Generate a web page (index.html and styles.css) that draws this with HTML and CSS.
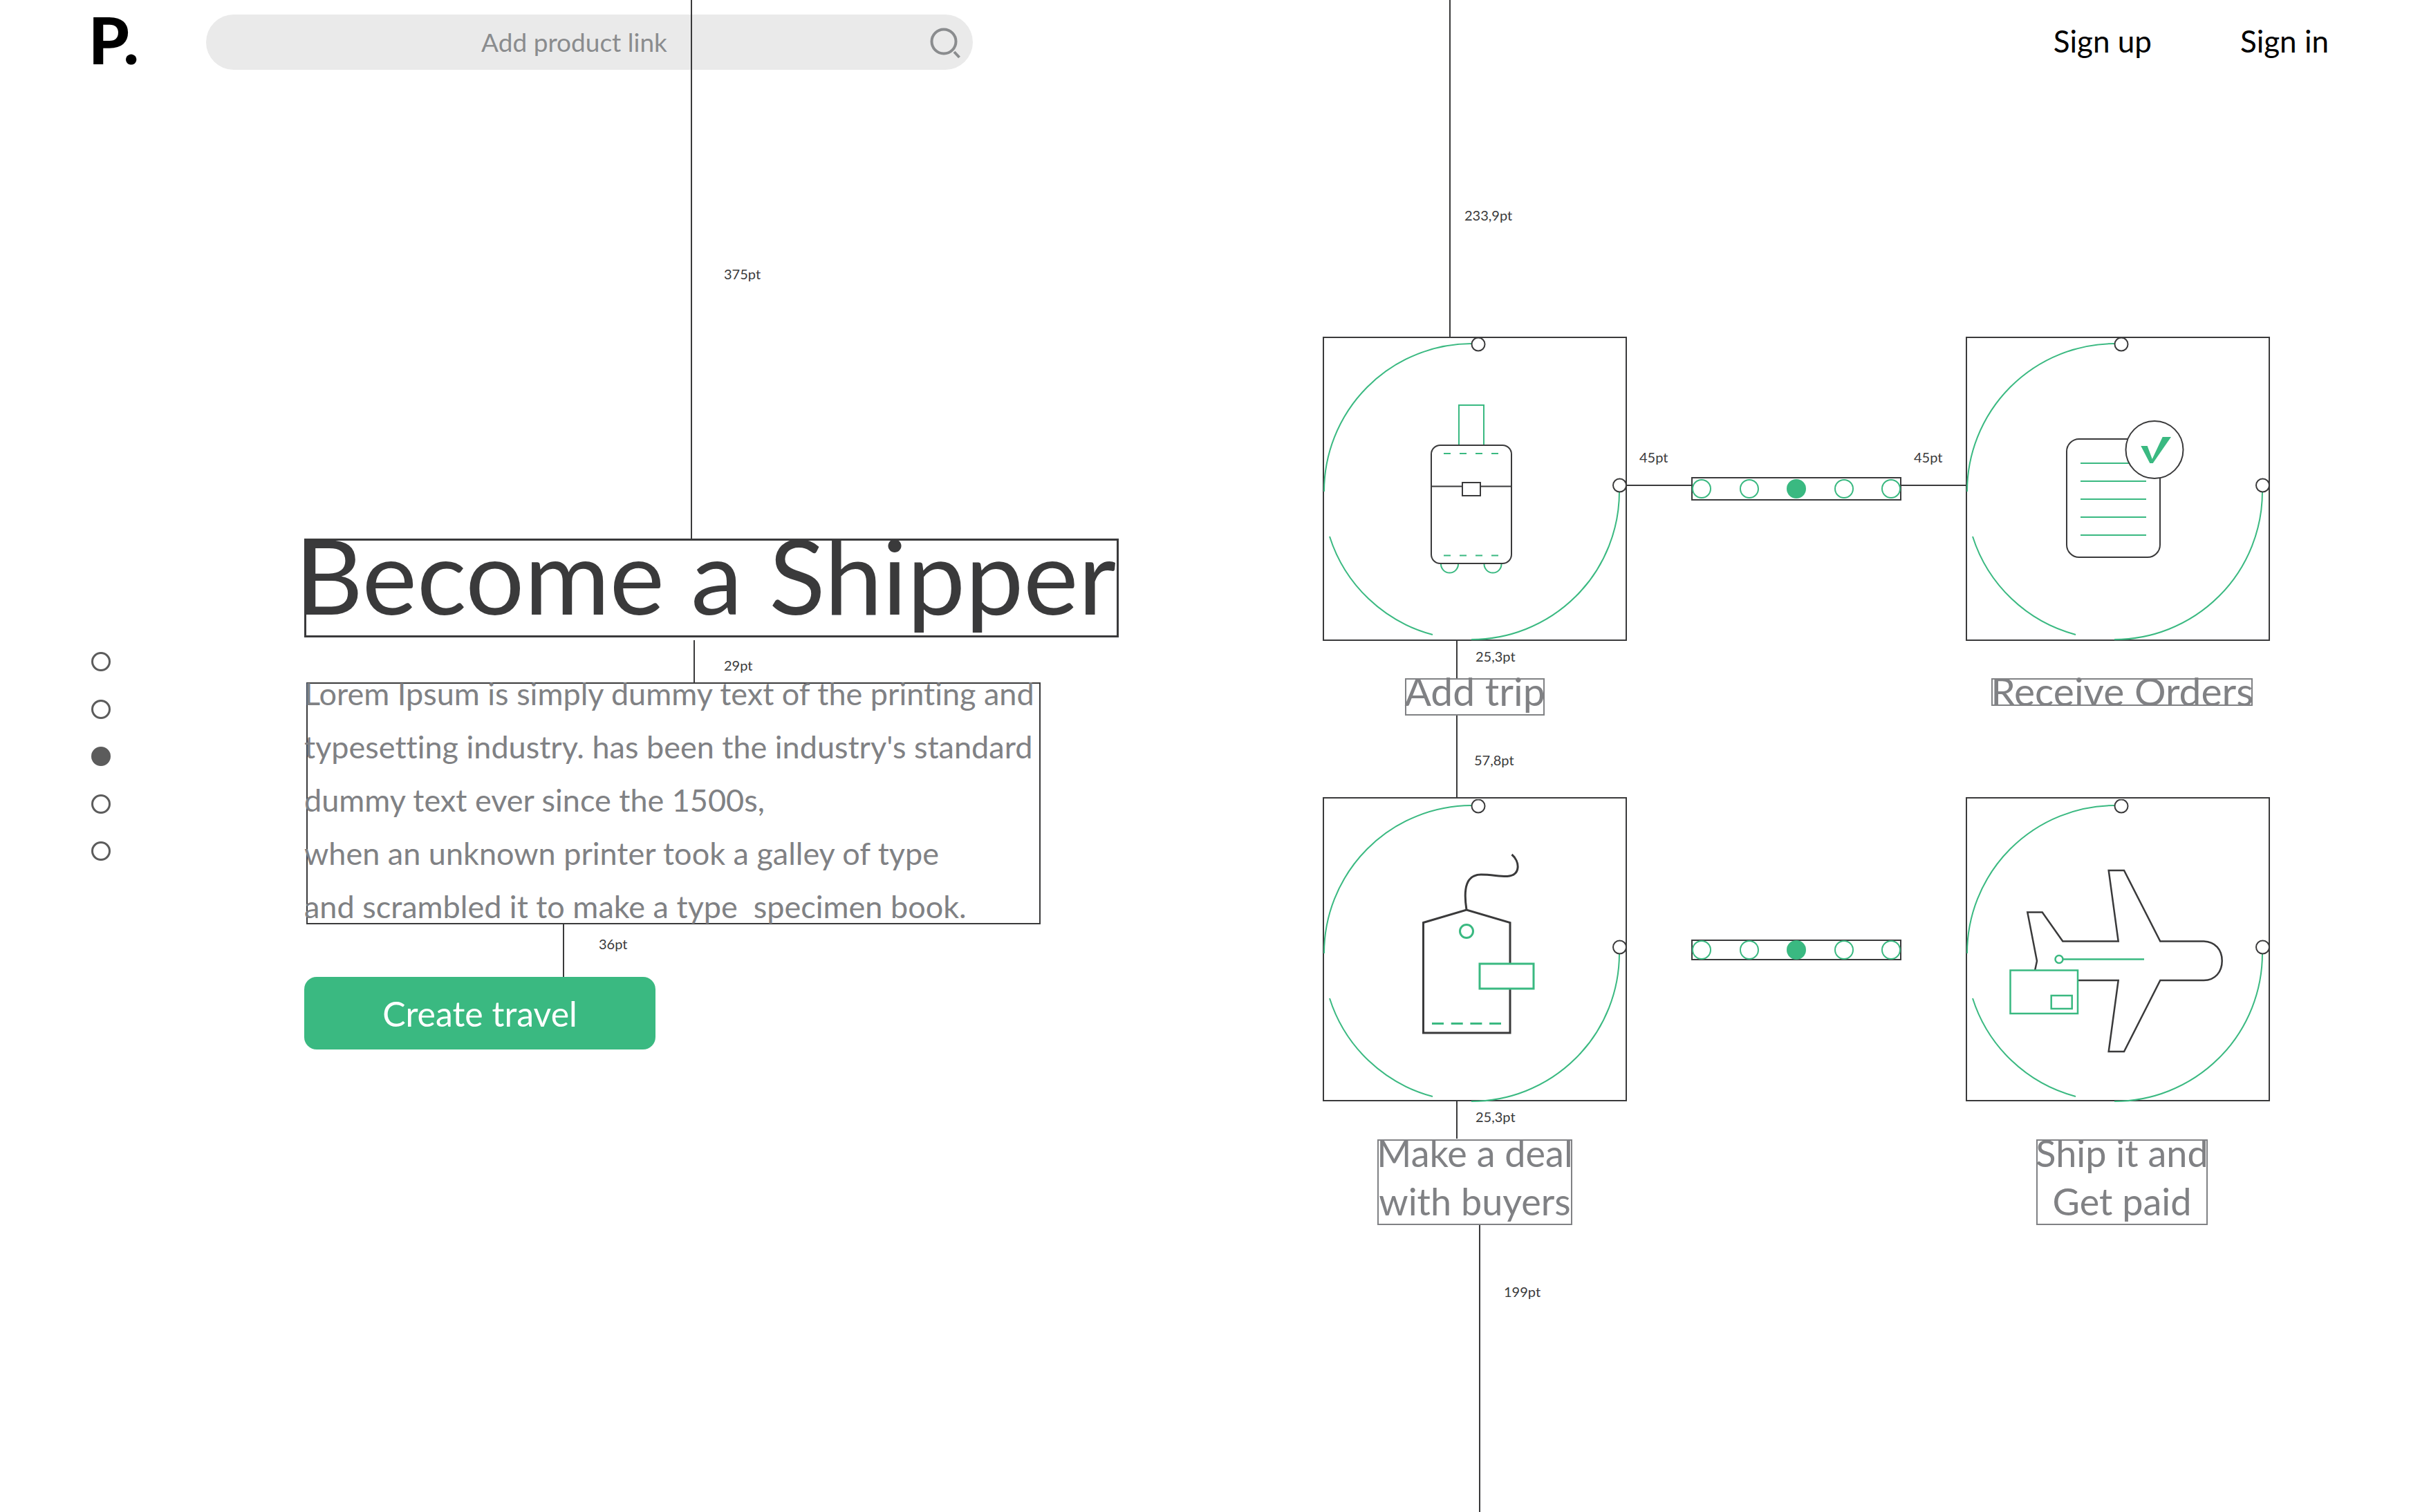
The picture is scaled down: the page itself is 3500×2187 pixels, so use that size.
FILE: index.html
```html
<!DOCTYPE html>
<html lang="en">
<head>
<meta charset="utf-8">
<title>Become a Shipper</title>
<meta name="viewport" content="width=device-width, initial-scale=1">
<link rel="stylesheet" href="styles.css">
</head>
<body>
<svg class="sprite" aria-hidden="true">
  <symbol id="orbit" viewBox="0 0 438 440">
    <g fill="none" stroke="#3ab981" stroke-width="2">
      <path d="M1 223A214 214 0 0 1 214 9"/>
      <path d="M428 223A214 214 0 0 1 214 437"/>
      <path d="M9 288A214 214 0 0 0 158 430"/>
    </g>
    <g fill="#fff" stroke="#3a3a3b" stroke-width="2">
      <circle cx="224" cy="10" r="9.500"/>
      <circle cx="428.500" cy="214" r="9.500"/>
    </g>
  </symbol>
</svg>
<div class="page">
  <header class="header">
    <a class="logo" href="#">P.</a>
    <form class="search">
      <input class="search-input" type="text" placeholder="Add product link" aria-label="Add product link">
      <button class="search-button" type="button" aria-label="Search">
        <svg width="46" height="48" viewBox="0 0 46 48" fill="none" stroke="#8a8c8e" stroke-width="4"><circle cx="21" cy="21" r="17.500"/><path d="M36 36l7.500 8"/></svg>
      </button>
    </form>
    <nav class="account">
      <a href="#">Sign up</a>
      <a href="#">Sign in</a>
    </nav>
  </header>

  <main class="main">
    <nav class="pager" aria-label="Sections">
      <a class="dot" href="#" aria-label="Section 1"></a>
      <a class="dot" href="#" aria-label="Section 2"></a>
      <a class="dot dot-current" href="#" aria-label="Section 3"></a>
      <a class="dot" href="#" aria-label="Section 4"></a>
      <a class="dot" href="#" aria-label="Section 5"></a>
    </nav>

    <section class="intro">
      <div class="title-box">
        <div class="ruler ruler-top ruler-title"><span>375pt</span></div>
        <h1 class="title">Become a Shipper</h1>
      </div>
      <div class="ruler ruler-text"><span>29pt</span></div>
      <div class="text-box">
        <p class="text">Lorem Ipsum is simply dummy text of the printing and<br>typesetting industry. has been the industry's standard<br>dummy text ever since the 1500s,<br>when an unknown printer took a galley of type<br>and scrambled it to make a type&nbsp; specimen book.</p>
      </div>
      <div class="ruler ruler-button"><span>36pt</span></div>
      <button class="create" type="button">Create travel</button>
    </section>

    <section class="steps">
      <article class="step">
        <div class="frame">
          <div class="ruler ruler-top ruler-frame"><span>233,9pt</span></div>
          <svg class="art" viewBox="0 0 438 440" fill="none" stroke="#3a3a3b" stroke-width="2">
            <use href="#orbit" width="438" height="440"/>
            <path stroke="#3ab981" d="M196 156V98h36v58"/>
            <rect x="156" y="156" width="116" height="171" rx="13"/>
            <path d="M156 215.500h116"/>
            <rect x="201" y="210" width="26" height="19" fill="#fff"/>
            <path stroke="#3ab981" stroke-dasharray="10 13" d="M174 168h82M174 315.500h82"/>
            <path stroke="#3ab981" d="M170 328a12.500 12.500 0 0 0 25 0M232.500 328a12.500 12.500 0 0 0 25 0"/>
          </svg>
        </div>
        <div class="ruler ruler-label"><span>25,3pt</span></div>
        <h2 class="label label-descender"><span>Add trip</span></h2>
        <div class="ruler ruler-next"><span>57,8pt</span></div>
      </article>

      <div class="connector">
        <div class="leg"><span>45pt</span></div>
        <div class="beads"><i></i><i></i><i class="bead-current"></i><i></i><i></i></div>
        <div class="leg"><span>45pt</span></div>
      </div>

      <article class="step step-right">
        <div class="frame">
          <svg class="art" viewBox="0 0 438 440" fill="none" stroke="#3a3a3b" stroke-width="2">
            <use href="#orbit" width="438" height="440"/>
            <rect x="145" y="147" width="135" height="171" rx="18"/>
            <path stroke="#3ab981" d="M165 182h70M165 208h95M165 234h95M165 260h95M165 286h95"/>
            <circle cx="272" cy="162.500" r="41.500" fill="#fff"/>
            <path fill="#3ab981" stroke="none" d="M252.300 157h9.400l7 18.900L283.700 144H296l-26.300 38h-4.400z"/>
          </svg>
        </div>
        <h2 class="label"><span>Receive Orders</span></h2>
      </article>

      <article class="step">
        <div class="frame">
          <svg class="art" viewBox="0 0 438 440" fill="none" stroke="#3a3a3b" stroke-width="3">
            <use href="#orbit" y="2" width="438" height="440"/>
            <path d="M144.500 180.500L207 162l63 18.500V340H144.500z"/>
            <path d="M207 162C202 130 207 111 228 111C243 111 256 114 266 113.500C286 112 284 92 272.500 82"/>
            <g stroke="#3ab981">
              <circle cx="207" cy="193" r="9.500"/>
              <rect x="226" y="240" width="78" height="36" fill="#fff"/>
              <path stroke-dasharray="17 10.700" d="M157 326.500h100"/>
            </g>
          </svg>
        </div>
        <div class="ruler ruler-label"><span>25,3pt</span></div>
        <h2 class="label label-descender label-double"><span>Make a deal<br>with buyers</span></h2>
        <div class="ruler ruler-bottom"><span>199pt</span></div>
      </article>

      <div class="connector connector-plain">
        <div class="beads beads-tight"><i></i><i></i><i class="bead-current"></i><i></i><i></i></div>
      </div>

      <article class="step step-right">
        <div class="frame">
          <svg class="art" viewBox="0 0 438 440" fill="none" stroke="#3a3a3b" stroke-width="2.500">
            <use href="#orbit" y="2" width="438" height="440"/>
            <path d="M99 250L102 236L88.300 165.500H109.700L139.300 207.500H219.700L205.700 105H228L280.300 207.500H343.300C360 208 369.700 220 369.700 235.700S360 264 343.300 264H280.300L228 367H205.700L219.700 264H161"/>
            <g stroke="#3ab981">
              <circle cx="134" cy="233.600" r="5.500"/>
              <path d="M140 233.600h117"/>
              <rect x="63.500" y="249.500" width="97.500" height="62.500" fill="#fff"/>
              <rect x="122.700" y="286" width="30" height="19"/>
            </g>
          </svg>
        </div>
        <h2 class="label label-descender label-double"><span>Ship it and<br>Get paid</span></h2>
      </article>
    </section>
  </main>
</div>
</body>
</html>
```
FILE: styles.css
```css
:root {
  --ink: #3a3a3b;
  --grey: #808184;
  --green: #3ab981;
}

* {
  box-sizing: border-box;
}

body {
  margin: 0;
  background: #fff;
  color: var(--ink);
  font-family: Lato, "Open Sans", sans-serif;
  font-variant-ligatures: none;
}

.sprite {
  position: absolute;
  width: 0;
  height: 0;
}

.page {
  display: flex;
  flex-direction: column;
  min-height: 100vh;
  overflow: hidden;
}

/* Header */
.header {
  display: flex;
  align-items: center;
  height: 122px;
  padding: 0 132px 0 128px;
}

.logo {
  width: 170px;
  padding-bottom: 8px;
  color: #000;
  font-family: "Lato Black", Lato, sans-serif;
  font-size: 94px;
  font-weight: 900;
  line-height: 114px;
  text-decoration: none;
}

.search {
  position: relative;
  width: 1109px;
}

.search-input {
  display: block;
  width: 100%;
  height: 80px;
  padding: 0 84px 2px 40px;
  border: 0;
  border-radius: 40px;
  background: #eaeaea;
  font: 37px Lato, sans-serif;
  text-align: center;
}

.search-input::placeholder {
  color: #8a8c8e;
  opacity: 1;
}

.search-button {
  position: absolute;
  top: 18px;
  right: 17px;
  padding: 0;
  border: 0;
  background: none;
}

.search-button svg {
  display: block;
}

.account {
  display: flex;
  gap: 128px;
  margin-left: auto;
  padding-bottom: 4px;
  font-size: 44px;
}

.account a {
  color: #000;
  text-decoration: none;
}

/* Page body */
.main {
  display: grid;
  flex: 1;
  grid-template-columns: 308px 1fr 1370px;
  padding: 0 217px 0 132px;
}

.pager {
  display: flex;
  flex-direction: column;
  justify-content: space-between;
  height: 302px;
  margin-top: 821px;
}

.dot {
  width: 28px;
  height: 28px;
  border: 3px solid #5c5c5c;
  border-radius: 50%;
}

.dot-current {
  background: #5c5c5c;
}

/* Measuring lines */
.ruler {
  border-left: 2px solid var(--ink);
  font-size: 20px;
  line-height: 24px;
}

.ruler-top {
  position: absolute;
  bottom: 100%;
  display: flex;
  align-items: flex-end;
  height: 100vh;
}

.ruler-title {
  left: 556px;
  padding: 0 0 374px 46px;
}

.ruler-frame {
  left: 181px;
  padding: 0 0 166px 20px;
}

.ruler-text {
  height: 61px;
  margin: 4px 0 0 563px;
  padding: 24px 0 0 42px;
}

.ruler-button {
  height: 76px;
  margin-left: 374px;
  padding: 16px 0 0 50px;
}

.ruler-label {
  height: 54px;
  margin-left: 193px;
  padding: 10px 0 0 26px;
}

.ruler-next {
  flex: 1;
  margin-left: 193px;
  padding: 52px 0 0 24px;
}

.ruler-bottom {
  flex: 1;
  margin-left: 226px;
  padding: 84px 0 0 34px;
}

/* Introduction */
.intro {
  margin-top: 657px;
}

.title-box {
  position: relative;
  width: 1178px;
  height: 143px;
  border: 3px solid var(--ink);
}

.title {
  margin: 0 -15px;
  font-size: 150px;
  font-weight: 400;
  line-height: 98px;
  white-space: nowrap;
}

.text-box {
  width: 1062px;
  height: 350px;
  margin-left: 3px;
  border: 2px solid var(--ink);
}

.text {
  margin: -24px 0 0 -5px;
  color: var(--grey);
  font-size: 45px;
  line-height: 77px;
  white-space: nowrap;
}

.create {
  display: block;
  width: 508px;
  height: 105px;
  padding: 0;
  border: 0;
  border-radius: 18px;
  background: var(--green);
  color: #fff;
  font: 50px Lato, sans-serif;
}

/* Steps */
.steps {
  display: grid;
  grid-template-columns: 440px 1fr 440px;
  grid-template-rows: 666px 1fr;
  margin-top: 365px;
}

.step {
  display: flex;
  flex-direction: column;
}

.frame {
  position: relative;
  height: 440px;
  border: 2px solid var(--ink);
}

.art {
  display: block;
  width: 438px;
  height: 440px;
  margin: -1px;
}

.label {
  align-self: center;
  margin: 0;
  border: 2px solid var(--grey);
  color: var(--grey);
  font-size: 57px;
  font-weight: 400;
  line-height: 70px;
  text-align: center;
  white-space: nowrap;
}

.label span {
  display: block;
  margin: -19px -3px -15px;
}

.label-descender span {
  margin-bottom: -1px;
}

.label-double {
  margin-top: 1px;
  font-size: 54px;
}

.label-double span {
  margin: -17px -3px -3px;
}

.step-right .label {
  margin: 54px 0 0 12px;
}

.step-right .label-double {
  margin-top: 55px;
}

/* Connectors */
.connector {
  display: flex;
  align-items: center;
  justify-content: center;
  align-self: start;
  margin-top: 203px;
}

.connector-plain {
  margin-top: 206px;
}

.beads {
  display: flex;
  align-items: center;
  justify-content: space-between;
  width: 304px;
  height: 34px;
  border: 2px solid var(--ink);
}

.beads-tight {
  height: 30px;
}

.beads i {
  width: 28px;
  height: 28px;
  margin: 0 -1px;
  border: 2px solid var(--green);
  border-radius: 50%;
}

.beads .bead-current {
  background: var(--green);
}

.leg {
  position: relative;
  flex: 1;
  margin-bottom: 10px;
  border-top: 2px solid var(--ink);
  font-size: 20px;
  line-height: 24px;
}

.leg span {
  position: absolute;
  bottom: 30px;
  left: 18px;
}
```
